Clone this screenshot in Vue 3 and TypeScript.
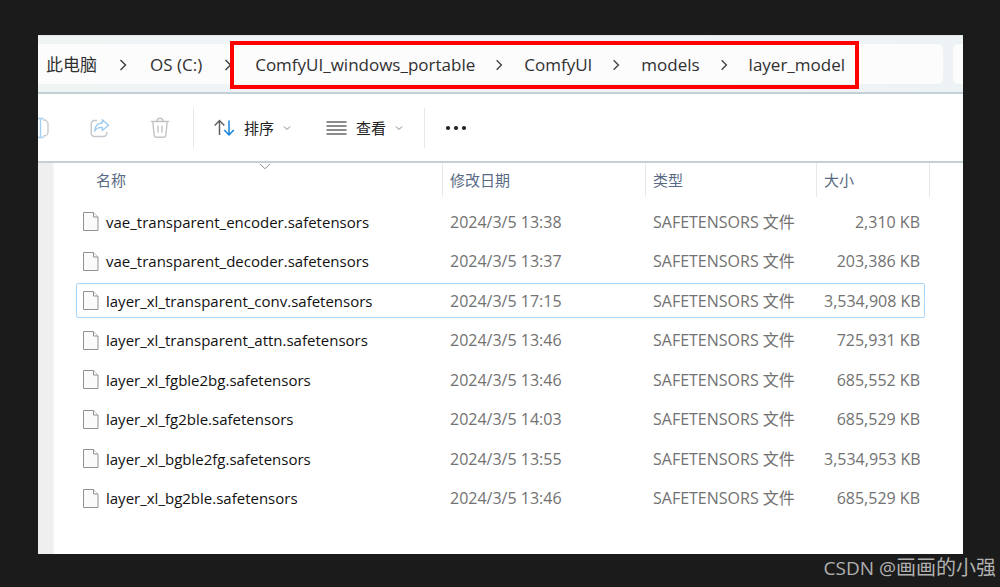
<script setup lang="ts">
interface FileRow {
  name: string
  date: string
  size: string
  focused?: boolean
}

const rootCrumbs: string[] = ['此电脑', 'OS (C:)']
const markedCrumbs: string[] = ['ComfyUI_windows_portable', 'ComfyUI', 'models', 'layer_model']

const files: FileRow[] = [
  { name: 'vae_transparent_encoder.safetensors', date: '2024/3/5 13:38', size: '2,310 KB' },
  { name: 'vae_transparent_decoder.safetensors', date: '2024/3/5 13:37', size: '203,386 KB' },
  { name: 'layer_xl_transparent_conv.safetensors', date: '2024/3/5 17:15', size: '3,534,908 KB', focused: true },
  { name: 'layer_xl_transparent_attn.safetensors', date: '2024/3/5 13:46', size: '725,931 KB' },
  { name: 'layer_xl_fgble2bg.safetensors', date: '2024/3/5 13:46', size: '685,552 KB' },
  { name: 'layer_xl_fg2ble.safetensors', date: '2024/3/5 14:03', size: '685,529 KB' },
  { name: 'layer_xl_bgble2fg.safetensors', date: '2024/3/5 13:55', size: '3,534,953 KB' },
  { name: 'layer_xl_bg2ble.safetensors', date: '2024/3/5 13:46', size: '685,529 KB' },
]
</script>

<template>
  <div class="desktop">
    <main class="window">
      <header class="address">
        <nav class="path" aria-label="路径">
          <template v-for="crumb in rootCrumbs" :key="crumb">
            <a class="crumb" href="#">{{ crumb }}</a>
            <svg class="sep" viewBox="0 0 52 16" aria-hidden="true"><path d="M23 3l5 5-5 5" /></svg>
          </template>
          <div class="marked">
            <template v-for="(crumb, i) in markedCrumbs" :key="crumb">
              <svg v-if="i > 0" class="sep" viewBox="0 0 52 16" aria-hidden="true"><path d="M23 3l5 5-5 5" /></svg>
              <a class="crumb" href="#">{{ crumb }}</a>
            </template>
          </div>
        </nav>
        <div class="search"></div>
      </header>

      <div class="toolbar">
        <button class="tool rename" type="button" aria-label="重命名">
          <svg width="24" height="24" viewBox="0 0 24 24" fill="none" stroke-width="1.4">
            <path d="M11 4H6a3 3 0 0 0-3 3v10a3 3 0 0 0 3 3h5M17 4h1a4 4 0 0 1 4 4v8a4 4 0 0 1-4 4h-1" stroke="#c6c9cc" />
            <path d="M14.5 2.5v19M11.5 2.5h6M11.5 21.5h6M6 7l3.5 9H6" stroke="#a5cff0" />
          </svg>
        </button>
        <button class="tool share" type="button" aria-label="共享">
          <svg width="20" height="20" viewBox="0 0 20 20" fill="none" stroke-width="1.4" stroke-linejoin="round">
            <path d="M7 2.5H4.5A3.3 3.3 0 0 0 1.2 5.800v9.400a3.300 3.300 0 0 0 3.300 3.300h9a3.300 3.300 0 0 0 3.300-3.300V14" stroke="#c4c8cc" />
            <path d="M12.3 1.8l6.2 5.4-6.2 5.3V9.400C8.500 9.300 6 10.600 4.700 13c.2-5 3-7.700 7.600-8z" stroke="#9fcbee" />
          </svg>
        </button>
        <button class="tool delete" type="button" aria-label="删除">
          <svg width="20" height="22" viewBox="0 0 20 22" fill="none" stroke="#c3c3c3" stroke-width="1.4">
            <path d="M1 4.500h18M7 4.300a3 3 0 0 1 6 0M2.800 4.700l1.400 13.500a2.200 2.200 0 0 0 2.200 2h7.200a2.200 2.200 0 0 0 2.200-2l1.400-13.500M8 8.500v7M12 8.500v7" />
          </svg>
        </button>
        <button class="tool menu sort" type="button">
          <svg width="21" height="18" viewBox="0 0 21 18" fill="none" stroke-width="1.5">
            <path d="M5.500 16V1.500M.7 6.500l4.800-5 4.800 5" stroke="#606060" />
            <path d="M15 1.500V16M10.200 11l4.800 5 4.800-5" stroke="#1682dc" />
          </svg>
          <span>排序</span>
          <svg class="caret" width="8" height="6" viewBox="0 0 8 6"><path d="M1 1.500l3 3 3-3" /></svg>
        </button>
        <button class="tool menu view" type="button">
          <svg width="21" height="16" viewBox="0 0 21 16" fill="none" stroke="#666" stroke-width="1.3">
            <path d="M.5 2h20M.5 6h20M.5 10h20M.5 14h20" />
          </svg>
          <span>查看</span>
          <svg class="caret" width="8" height="6" viewBox="0 0 8 6"><path d="M1 1.500l3 3 3-3" /></svg>
        </button>
        <button class="tool more" type="button" aria-label="更多">
          <svg width="22" height="6" viewBox="0 0 22 6" fill="#222">
            <circle cx="3" cy="3" r="2.100" /><circle cx="11" cy="3" r="2.100" /><circle cx="19" cy="3" r="2.100" />
          </svg>
        </button>
      </div>

      <section class="content">
        <div class="rail"></div>
        <div class="list">
          <table>
            <colgroup>
              <col class="col-name" /><col class="col-date" /><col class="col-type" /><col class="col-size" />
            </colgroup>
            <thead>
              <tr>
                <th class="name" scope="col">
                  名称
                  <svg class="sorted" width="12" height="7" viewBox="0 0 12 7"><path d="M1 .800l5 5 5-5" /></svg>
                </th>
                <th scope="col">修改日期</th>
                <th scope="col">类型</th>
                <th scope="col">大小</th>
              </tr>
            </thead>
            <tbody>
              <tr v-for="file in files" :key="file.name" :class="{ focused: file.focused }">
                <td class="name">
                  <div class="file">
                    <svg width="16" height="19" viewBox="0 0 16 19" fill="#fafafa" stroke="#929292" stroke-width="1">
                      <path d="M.5.5h10l4.500 4.500v13.500H.5z" /><path d="M10.500.5v4.500h4.500" />
                    </svg>
                    <span>{{ file.name }}</span>
                  </div>
                </td>
                <td>{{ file.date }}</td>
                <td>SAFETENSORS 文件</td>
                <td class="size">{{ file.size }}</td>
              </tr>
            </tbody>
          </table>
        </div>
      </section>
    </main>
    <footer class="credit"><span>CSDN @</span>画画的小强</footer>
  </div>
</template>

<style>
body {
  margin: 0;
  background: #1b1b1b;
}
</style>

<style scoped>
.desktop {
  box-sizing: border-box;
  min-height: 100vh;
  padding: 35px 37px 0 38px;
  background: #1b1b1b;
  font-family: "Open Sans", "Noto Sans CJK SC", sans-serif;
  font-size: 15px;
}
.window {
  background: #fff;
  overflow: hidden;
}
.address {
  display: flex;
  gap: 10px;
  padding: 8px 0;
  background: linear-gradient(90deg, #eff4f5, #f1f4f7 60%, #edf2f5);
  border-top: 1px solid #e4e7e9;
  border-bottom: 2px solid #c3d0d6;
}
.path {
  box-sizing: border-box;
  display: flex;
  flex: 1;
  align-items: center;
  height: 40px;
  padding: 2px 0 0 8px;
  background: #fcfcfd;
  border-radius: 0 5px 5px 0;
  font-size: 17px;
  line-height: 24px;
  white-space: nowrap;
}
.search {
  width: 10px;
  background: #fcfcfd;
  border-radius: 5px 0 0 5px;
}
.crumb {
  color: #303030;
  text-decoration: none;
}
.sep {
  flex: none;
  width: 53px;
  height: 16px;
  fill: none;
  stroke: #444;
  stroke-width: 1.5;
}
.marked {
  position: relative;
  display: flex;
  align-items: center;
}
.marked .sep {
  width: 49px;
}
.marked::after {
  position: absolute;
  inset: -12px -14px -12px -25px;
  border: 4px solid #fe0000;
  content: "";
  pointer-events: none;
}
.toolbar {
  display: flex;
  align-items: center;
  height: 67px;
  border-bottom: 2px solid #c3d0d6;
}
.tool {
  display: flex;
  align-items: center;
  justify-content: center;
  height: 40px;
  padding: 0;
  border: 0;
  background: none;
  color: #222;
  font: inherit;
}
.rename {
  width: 24px;
  margin-left: -12px;
}
.share {
  width: 60px;
  margin-left: 20px;
}
.delete {
  width: 60px;
}
.menu {
  gap: 9px;
}
.sort {
  padding-left: 20px;
  border-left: 1px solid #e8e8e8;
  margin-left: 3px;
}
.view {
  padding: 0 21px 0 35px;
}
.more {
  padding-left: 20px;
  border-left: 1px solid #e8e8e8;
}
.caret,
.sorted {
  fill: none;
  stroke: #858585;
}
.content {
  display: flex;
}
.rail {
  width: 15px;
  background: #efefef;
  border-right: 2px solid #fafafa;
}
.list {
  flex: 1;
  padding: 0 33px 36px 21px;
}
table {
  width: 100%;
  table-layout: fixed;
  border-collapse: separate;
  border-spacing: 0;
  color: #727272;
  white-space: nowrap;
}
.col-date {
  width: 203px;
}
.col-type {
  width: 171px;
}
.col-size {
  width: 113px;
}
th {
  position: relative;
  box-sizing: border-box;
  height: 34px;
  padding: 0 0 2px 7px;
  border-right: 1px solid #e6e8ea;
  color: #596a85;
  font-weight: 400;
  text-align: left;
}
th.name {
  padding-left: 20px;
}
.sorted {
  position: absolute;
  top: 0;
  left: 50%;
}
thead::after {
  display: block;
  height: 5px;
  content: "";
}
tbody tr {
  position: relative;
  height: 39px;
}
tbody tr:nth-child(even) {
  height: 40px;
}
td {
  padding: 0 0 0 7px;
  font-size: 16px;
  line-height: 22px;
}
td.name {
  color: #111;
  font-size: 15px;
}
td.size {
  padding-right: 10px;
  text-align: right;
}
.file {
  display: flex;
  align-items: center;
  gap: 7px;
}
.file svg {
  flex: none;
}
.focused .name::after {
  position: absolute;
  inset: 2px 5px 2px 0;
  border: 1px solid #abd8fa;
  border-radius: 2px;
  content: "";
  pointer-events: none;
}
.credit {
  margin-right: -33px;
  color: #b0b0b0;
  font-family: "Noto Sans CJK SC", sans-serif;
  font-size: 20px;
  line-height: 26px;
  text-align: right;
}
.credit span {
  font-family: "Open Sans", sans-serif;
  font-size: 19px;
}
</style>
